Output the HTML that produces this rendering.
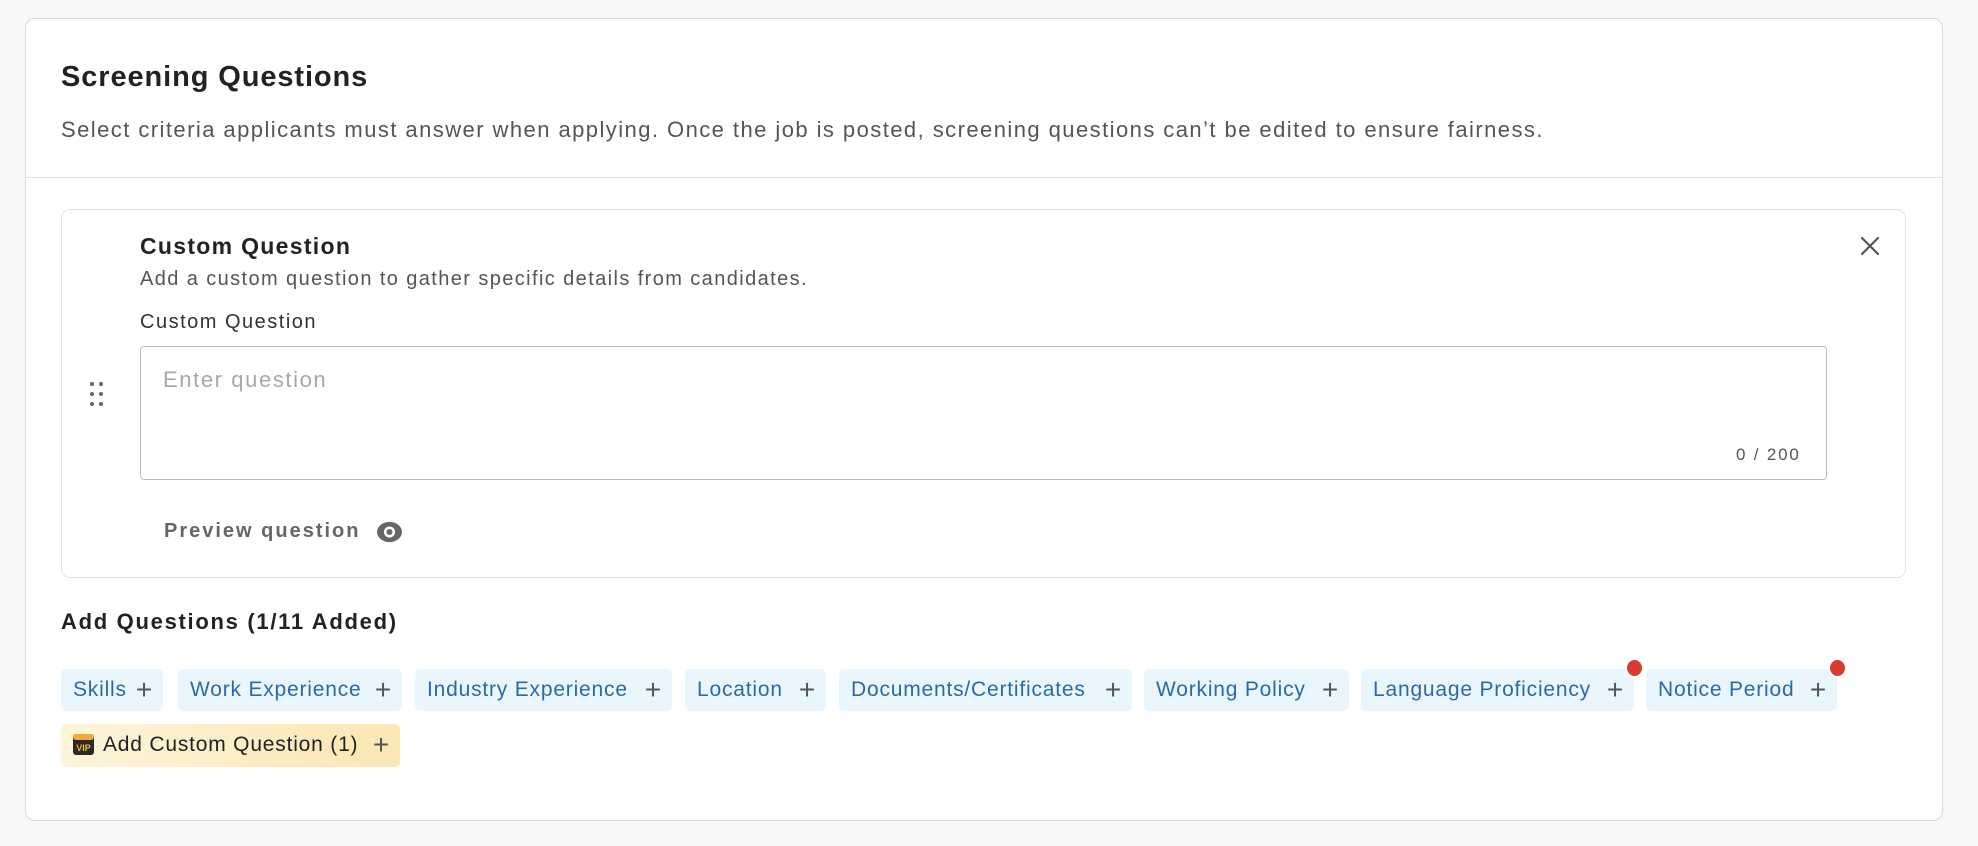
<!DOCTYPE html>
<html><head><meta charset="utf-8"><style>
*{box-sizing:border-box;margin:0;padding:0}
body{width:1978px;height:846px;background:#f7f8fa;font-family:"Liberation Sans",sans-serif;position:relative;overflow:hidden;color:#222}
.card{position:absolute;left:25px;top:18px;width:1918px;height:803px;background:#fff;border:1px solid #d9d9d9;border-radius:10px}
.abs{position:absolute;white-space:nowrap}
.chip{position:absolute;height:42px;background:#eaf6fd;border-radius:5px;color:#2b6aa6;font-size:21px;line-height:42px;padding-left:12px;letter-spacing:0.8px}
.chip .p{position:absolute;right:10px;top:0;color:#555;font-size:28px;font-weight:300}
.dot{position:absolute;right:-10px;top:-11px;width:19px;height:20px;border-radius:50%;background:#d93b32;border:2px solid #fff}
</style></head><body>
<div class="card"></div>
<div class="abs" style="left:61px;top:61px;font-size:29px;font-weight:bold;color:#222;letter-spacing:0.9px">Screening Questions</div>
<div class="abs" style="left:61px;top:117px;font-size:22px;color:#555;letter-spacing:1.44px">Select criteria applicants must answer when applying. Once the job is posted, screening questions can’t be edited to ensure fairness.</div>
<div class="abs" style="left:26px;top:177px;width:1916px;height:1px;background:#e2e2e2"></div>
<div class="abs" style="left:61px;top:209px;width:1845px;height:369px;border:1px solid #e3e3e3;border-radius:9px"></div>
<div class="abs" style="left:140px;top:233px;font-size:23px;font-weight:bold;color:#222;letter-spacing:1.3px">Custom Question</div>
<div class="abs" style="left:140px;top:268px;font-size:20px;color:#555;letter-spacing:1.4px">Add a custom question to gather specific details from candidates.</div>
<div class="abs" style="left:140px;top:311px;font-size:20px;color:#333;letter-spacing:1.5px">Custom Question</div>
<svg class="abs" style="left:1858px;top:234px" width="24" height="24" viewBox="0 0 24 24"><path d="M4 4L20 20M20 4L4 20" stroke="#555" stroke-width="2.2" stroke-linecap="round"/></svg>
<svg class="abs" style="left:89px;top:381px" width="16" height="26" viewBox="0 0 16 26"><g fill="#666"><circle cx="3" cy="3" r="2"/><circle cx="12" cy="3" r="2"/><circle cx="3" cy="13" r="2"/><circle cx="12" cy="13" r="2"/><circle cx="3" cy="23" r="2"/><circle cx="12" cy="23" r="2"/></g></svg>
<div class="abs" style="left:140px;top:346px;width:1687px;height:134px;border:1px solid #bdbdbd;border-radius:4px"></div>
<div class="abs" style="left:163px;top:367px;font-size:22px;color:#a8a8a8;letter-spacing:1.6px">Enter question</div>
<div class="abs" style="left:1736px;top:445px;font-size:17px;color:#555;letter-spacing:1.8px">0 / 200</div>
<div class="abs" style="left:164px;top:520px;font-size:20px;font-weight:bold;color:#666;letter-spacing:2px">Preview question</div>
<svg class="abs" style="left:376px;top:520px" width="27" height="24" viewBox="0 0 28 26"><ellipse cx="14" cy="13" rx="13.5" ry="11" fill="#666"/><circle cx="14" cy="13" r="6" fill="#fff"/><circle cx="14" cy="13" r="3.3" fill="#666"/></svg>
<div class="abs" style="left:61px;top:609px;font-size:22px;font-weight:bold;color:#222;letter-spacing:1.7px">Add Questions (1/11 Added)</div>
<div class="chip" style="left:61px;top:669px;width:102px">Skills<span class="p">+</span></div>
<div class="chip" style="left:178px;top:669px;width:224px">Work Experience<span class="p">+</span></div>
<div class="chip" style="left:415px;top:669px;width:257px">Industry Experience<span class="p">+</span></div>
<div class="chip" style="left:685px;top:669px;width:141px">Location<span class="p">+</span></div>
<div class="chip" style="left:839px;top:669px;width:293px">Documents/Certificates<span class="p">+</span></div>
<div class="chip" style="left:1144px;top:669px;width:205px">Working Policy<span class="p">+</span></div>
<div class="chip" style="left:1361px;top:669px;width:273px">Language Proficiency<span class="p">+</span><span class="dot"></span></div>
<div class="chip" style="left:1646px;top:669px;width:191px">Notice Period<span class="p">+</span><span class="dot"></span></div>
<div class="chip" style="left:61px;top:724px;width:339px;height:43px;background:linear-gradient(90deg,#fdf4da,#fbe7b3);color:#222;padding-left:42px">Add Custom Question (1)<span class="p">+</span>
<svg style="position:absolute;left:12px;top:10px" width="21" height="21" viewBox="0 0 21 21"><rect x="0" y="0" width="21" height="21" rx="3" fill="#2a2a2a"/><rect x="0" y="0" width="21" height="6" rx="3" fill="#f3a936"/><text x="10.5" y="17" font-size="9" font-weight="bold" fill="#f3b43c" text-anchor="middle" font-family="Liberation Sans,sans-serif" letter-spacing="0">VIP</text></svg></div>
</body></html>
